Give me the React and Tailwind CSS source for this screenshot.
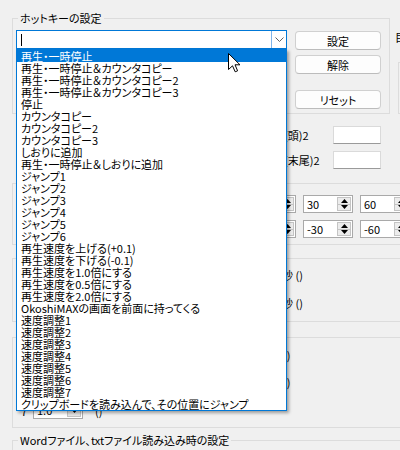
import React from "react";

const items = [
  "再生・一時停止",
  "再生・一時停止＆カウンタコピー",
  "再生・一時停止＆カウンタコピー2",
  "再生・一時停止＆カウンタコピー3",
  "停止",
  "カウンタコピー",
  "カウンタコピー2",
  "カウンタコピー3",
  "しおりに追加",
  "再生・一時停止＆しおりに追加",
  "ジャンプ1",
  "ジャンプ2",
  "ジャンプ3",
  "ジャンプ4",
  "ジャンプ5",
  "ジャンプ6",
  "再生速度を上げる(+0.1)",
  "再生速度を下げる(-0.1)",
  "再生速度を1.0倍にする",
  "再生速度を0.5倍にする",
  "再生速度を2.0倍にする",
  "OkoshiMAXの画面を前面に持ってくる",
  "速度調整1",
  "速度調整2",
  "速度調整3",
  "速度調整4",
  "速度調整5",
  "速度調整6",
  "速度調整7",
  "クリップボードを読み込んで、その位置にジャンプ",
];

function Btn({ children, className = "" }) {
  return (
    <div
      className={
        "w-[86px] h-[19px] flex items-center justify-center bg-[#fdfdfd] border border-[#d0d0d0] border-b-[#bcbcbc] rounded-[4px] " +
        className
      }
    >
      {children}
    </div>
  );
}

function Spin({ value }) {
  return (
    <div className="w-[50px] h-[18px] shrink-0 flex bg-white border border-[#a9a9a9]">
      <div className="flex-1 pl-[3px] leading-[16px]">{value}</div>
      <div className="w-[14px] my-[1px] mr-[1px] flex flex-col bg-[#ececec] border border-[#c4c4c4]">
        <div className="flex-1 flex items-center justify-center border-b border-[#c4c4c4]">
          <svg width="7" height="4" viewBox="0 0 7 4">
            <polygon points="0,4 3.5,0 7,4" fill="#000" />
          </svg>
        </div>
        <div className="flex-1 flex items-center justify-center">
          <svg width="7" height="4" viewBox="0 0 7 4">
            <polygon points="0,0 3.5,4 7,0" fill="#000" />
          </svg>
        </div>
      </div>
    </div>
  );
}

function Group({ label, className = "", children }) {
  return (
    <div className={"relative shrink-0 border border-[#dcdcdc] " + className}>
      {label && (
        <span className="absolute left-[5px] -top-[7px] px-[2px] bg-[#f0f0f0] leading-[13px] whitespace-nowrap">
          {label}
        </span>
      )}
      {children}
    </div>
  );
}

export default function App() {
  return (
    <div className="relative w-[400px] h-[450px] overflow-hidden bg-[#f0f0f0] text-black text-[11px] leading-[12px] font-['Noto_Sans_CJK_JP','Noto_Sans',sans-serif] [font-feature-settings:'palt']">
      <div className="flex flex-col pt-[18px]">
        {/* top row */}
        <div className="flex items-start shrink-0">
          <Group label="ホットキーの設定" className="ml-[12px] w-[378px] h-[96px]">
            <div className="flex pl-[3px] pt-[11px]">
              <div className="w-[271px] h-[19px] flex bg-white border border-[#0078d7]">
                <div className="flex-1">
                  <div className="ml-[4px] mt-[3px] w-px h-[12px] bg-black" />
                </div>
                <div className="w-[15px] flex items-center justify-center border-l border-[#7eb4ea]">
                  <svg width="9" height="5" viewBox="0 0 9 5">
                    <polyline points="0.5,0.5 4.5,4.5 8.5,0.5" fill="none" stroke="#606060" strokeWidth="1" />
                  </svg>
                </div>
              </div>
              <div className="ml-[8px] pt-[1px] flex flex-col">
                <Btn>設定</Btn>
                <Btn className="mt-[5px]">解除</Btn>
                <Btn className="mt-[16px]">リセット</Btn>
              </div>
            </div>
          </Group>
          <div className="ml-[5px] flex flex-col">
            <div className="pt-[13px] whitespace-nowrap">目</div>
            <div className="ml-[3px] mt-[19px] w-[20px] h-[52px] border border-[#dcdcdc]" />
          </div>
        </div>

        {/* label + textbox rows */}
        <div className="mt-[12px] flex items-center pl-[284px] h-[18px] shrink-0">
          <span className="w-[49px] whitespace-nowrap">(頭)2</span>
          <div className="w-[48px] h-[18px] bg-white border border-[#dadada] border-b-[#9a9a9a]" />
        </div>
        <div className="mt-[7px] flex items-center pl-[284px] h-[18px] shrink-0">
          <span className="w-[49px] whitespace-nowrap">(末尾)2</span>
          <div className="w-[48px] h-[18px] bg-white border border-[#dadada] border-b-[#9a9a9a]" />
        </div>

        {/* group 2 : spin boxes */}
        <Group className="mt-[14px] ml-[12px] w-[420px] h-[62px]">
          <div className="pt-[11px] pl-[176px] flex flex-col gap-[7px]">
            <div className="flex gap-[7px]">
              <Spin value="10" />
              <Spin value="15" />
              <Spin value="30" />
              <Spin value="60" />
            </div>
            <div className="flex gap-[7px]">
              <Spin value="-10" />
              <Spin value="-15" />
              <Spin value="-30" />
              <Spin value="-60" />
            </div>
          </div>
        </Group>

        {/* group 3 */}
        <Group className="mt-[13px] ml-[12px] w-[420px] h-[64px]">
          <div className="pt-[10px] pl-[269px] flex flex-col">
            <div className="whitespace-nowrap">秒 ()</div>
            <div className="mt-[16px] whitespace-nowrap">秒 ()</div>
          </div>
        </Group>

        {/* group 4 */}
        <Group className="mt-[15px] ml-[12px] w-[420px] h-[91px]">
          <div className="pt-[11px] flex flex-col">
            <div className="pl-[270px] whitespace-nowrap">()</div>
            <div className="mt-[15px] pl-[270px] whitespace-nowrap">()</div>
            <div className="mt-[14px] pl-[8px] flex items-center h-[17px]">
              <span className="w-[12px]">7</span>
              <div className="w-[50px] h-[17px] flex bg-white border border-[#a9a9a9]">
                <div className="flex-1 pl-[3px] leading-[15px]">1.0</div>
                <div className="w-[14px] my-[1px] mr-[1px] flex items-center justify-center bg-[#e5e5e5] border border-[#c4c4c4]">
                  <svg width="7" height="4" viewBox="0 0 7 4">
                    <polygon points="0,0 3.5,4 7,0" fill="#000" />
                  </svg>
                </div>
              </div>
              <span className="ml-[12px]">()</span>
            </div>
          </div>
        </Group>

        {/* group 5 */}
        <Group
          label="Wordファイル、txtファイル読み込み時の設定"
          className="mt-[12px] ml-[12px] w-[420px] h-[40px]"
        />
      </div>

      {/* open dropdown list */}
      <div className="absolute left-[16px] top-[49px] w-[271px] bg-white border border-[#0078d7] shadow-[2px_2px_3px_rgba(0,0,0,0.35)]">
        {items.map((t, i) => (
          <div
            key={i}
            className={
              "h-[12px] leading-[12px] pl-[4px] whitespace-nowrap " +
              (i === 0 ? "bg-[#0078d7] text-white" : "")
            }
          >
            {t}
          </div>
        ))}
      </div>

      {/* mouse pointer */}
      <svg
        className="absolute left-[228px] top-[53px]"
        width="13"
        height="20"
        viewBox="0 0 13 20"
      >
        <path
          d="M0.5 0.5 L0.5 16.5 L4.5 12.8 L7.2 18.8 L9.6 17.8 L7 11.8 L12 11.8 Z"
          fill="#fff"
          stroke="#000"
          strokeWidth="1"
          strokeLinejoin="miter"
        />
      </svg>
    </div>
  );
}
